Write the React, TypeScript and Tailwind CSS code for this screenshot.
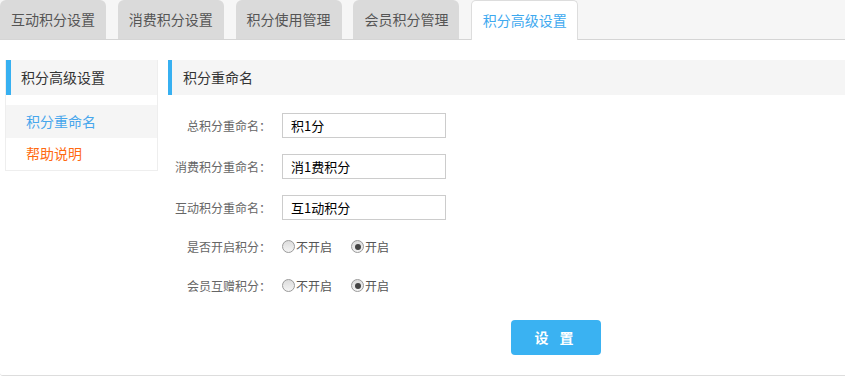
import { useState } from 'react'

const tabs = ['互动积分设置', '消费积分设置', '积分使用管理', '会员积分管理', '积分高级设置']

interface RadioProps {
  checked: boolean
  label: string
  onClick: () => void
}

function Radio({ checked, label, onClick }: RadioProps) {
  return (
    <span className="flex items-center cursor-pointer" onClick={onClick}>
      <span className="w-[13px] h-[13px] rounded-full border border-[#9a9a9a] bg-gradient-to-b from-[#dcdcdc] to-[#f4f4f4] flex items-center justify-center">
        {checked && <span className="w-[6px] h-[6px] rounded-full bg-[#444]" />}
      </span>
      <span className="text-[12px] text-[#555] ml-[1px]">{label}</span>
    </span>
  )
}

function RadioRow({ label }: { label: string }) {
  const [on, setOn] = useState(true)
  return (
    <div className="flex items-center h-[25px]">
      <div className="w-[103px] text-right text-[12px] text-[#666]">{label}</div>
      <div className="flex items-center ml-[11px] gap-[19px]">
        <Radio checked={!on} label="不开启" onClick={() => setOn(false)} />
        <Radio checked={on} label="开启" onClick={() => setOn(true)} />
      </div>
    </div>
  )
}

function InputRow({ label, value }: { label: string; value: string }) {
  return (
    <div className="flex items-center h-[25px] mb-[16px]">
      <div className="w-[103px] text-right text-[12px] text-[#666]">{label}</div>
      <input
        defaultValue={value}
        className="ml-[11px] w-[164px] h-[25px] border border-[#ccc] px-[8px] text-[13px] text-black outline-none"
      />
    </div>
  )
}

export default function App() {
  return (
    <div className="w-[845px] h-[378px] bg-white font-['Noto_Sans_CJK_SC','Noto_Sans',sans-serif] overflow-hidden">
      <div className="flex h-[40px] bg-[#f6f6f6] border-b border-[#d5d5d5] gap-[11.8px]">
        {tabs.map((t, i) =>
          i === tabs.length - 1 ? (
            <div
              key={t}
              className="w-[107px] h-[40px] bg-white border border-b-0 border-[#ddd] rounded-t-[5px] flex items-center justify-center text-[14px] text-[#3ea9ef]"
            >
              {t}
            </div>
          ) : (
            <div
              key={t}
              className="w-[106px] h-[39px] bg-[#dadada] rounded-t-[6px] flex items-center justify-center text-[14px] text-[#555]"
            >
              {t}
            </div>
          )
        )}
      </div>

      <div className="flex pt-[20px] pl-[5px] h-[336px] border-b border-[#ddd] rounded-bl-[3px]">
        <div className="w-[153px] self-start border-x border-b border-[#eee]">
          <div className="h-[35px] bg-[#f5f5f5] border-l-[5px] border-[#37b0f1] flex items-center pl-[10px] text-[14px] text-[#333]">
            积分高级设置
          </div>
          <div className="pt-[10px]">
            <div className="h-[33px] bg-[#f5f5f5] flex items-center pl-[20px] text-[14px] text-[#47a6ec]">
              积分重命名
            </div>
            <div className="h-[32px] flex items-center pl-[20px] pb-[2px] text-[14px] text-[#ff6a10]">
              帮助说明
            </div>
          </div>
        </div>

        <div className="flex-1 ml-[10px]">
          <div className="h-[35px] bg-[#f5f5f5] border-l-[4px] border-[#37b0f1] flex items-center pl-[11px] text-[14px] text-[#333]">
            积分重命名
          </div>
          <div className="pt-[18px]">
            <InputRow label="总积分重命名：" value="积1分" />
            <InputRow label="消费积分重命名：" value="消1费积分" />
            <InputRow label="互动积分重命名：" value="互1动积分" />
            <div className="-mt-[2px]">
              <RadioRow label="是否开启积分：" />
              <div className="h-[14px]" />
              <RadioRow label="会员互赠积分：" />
            </div>
            <div className="pl-[343px] mt-[22px]">
              <button className="w-[90px] h-[35px] bg-[#3ab2f2] rounded-[4px] text-white text-[14px] font-bold tracking-[4px]">
                设 置
              </button>
            </div>
          </div>
        </div>
      </div>
    </div>
  )
}
